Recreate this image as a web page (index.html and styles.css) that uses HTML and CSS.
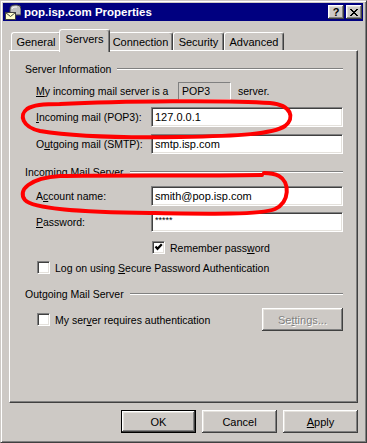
FILE: index.html
```html
<!DOCTYPE html>
<html lang="en">
<head>
    <meta charset="UTF-8">
    <title>pop.isp.com Properties</title>
    <link rel="stylesheet" href="styles.css">
</head>
<body>
    <div class="window">
        <div class="titlebar">
            <svg class="app-icon" viewBox="0 0 16 16">
                <path d="M5 11 V5 Q5 1 10 1 H12 Q16 1 16 5 V11 Z" fill="#c0c0c0" stroke="#404040"/>
                <path d="M7 5 Q7 3 10 3 H12" fill="none" stroke="#fff"/>
                <rect x="0.5" y="8.5" width="10" height="7" fill="#ffffcc" stroke="#404040"/>
                <polyline points="0.5,8.5 5.5,12.5 10.5,8.5" fill="none" stroke="#404040"/>
            </svg>
            <span class="title">pop.isp.com Properties</span>
            <div class="caption-buttons">
                <button class="cap-btn help">?</button>
                <button class="cap-btn">
                    <svg width="8" height="7" viewBox="0 0 8 7"><path d="M0 0 L7 7 M1 0 L8 7 M7 0 L0 7 M8 0 L1 7" stroke="#000" stroke-width="1"/></svg>
                </button>
            </div>
        </div>

        <div class="dialog">
            <div class="tabs">
                <div class="tab tab-general">General</div>
                <div class="tab tab-servers selected">Servers</div>
                <div class="tab tab-connection">Connection</div>
                <div class="tab tab-security">Security</div>
                <div class="tab tab-advanced">Advanced</div>
            </div>

            <div class="panel">
                <div class="group-title"><span>Server Information</span><i class="etch"></i></div>
                <div class="field-row type-row">
                    <label class="type-label"><u>M</u>y incoming mail server is a</label>
                    <div class="readonly-box">POP3</div>
                    <span class="type-suffix">server.</span>
                </div>
                <div class="field-row gap7">
                    <label><u>I</u>ncoming mail (POP3):</label>
                    <input class="textbox" type="text" value="127.0.0.1">
                </div>
                <div class="field-row gap7">
                    <label>O<u>u</u>tgoing mail (SMTP):</label>
                    <input class="textbox" type="text" value="smtp.isp.com">
                </div>

                <div class="group-title group-two"><span>Incoming Mail Server</span><i class="etch"></i></div>
                <div class="field-row gap7">
                    <label>A<u>c</u>count name:</label>
                    <input class="textbox" type="text" value="smith@pop.isp.com">
                </div>
                <div class="field-row gap6">
                    <label><u>P</u>assword:</label>
                    <input class="textbox password" type="text" value="*****">
                </div>
                <div class="check-row remember-row">
                    <span class="checkbox">
                        <svg width="9" height="9" viewBox="0 0 9 9"><polyline points="1.5,3.5 3.5,5.8 7.8,1.2" fill="none" stroke="#000" stroke-width="2.2"/></svg>
                    </span>
                    <span>Remember pass<u>w</u>ord</span>
                </div>
                <div class="check-row logon-row">
                    <span class="checkbox"></span>
                    <span>Log on using <u>S</u>ecure Password Authentication</span>
                </div>

                <div class="group-title group-three"><span>Outgoing Mail Server</span><i class="etch"></i></div>
                <div class="check-row auth-row">
                    <span class="checkbox"></span>
                    <span>My ser<u>v</u>er requires authentication</span>
                    <button class="btn settings" disabled>Se<u>t</u>tings...</button>
                </div>
            </div>

            <div class="actions">
                <button class="btn default">OK</button>
                <button class="btn">Cancel</button>
                <button class="btn"><u>A</u>pply</button>
            </div>
        </div>

        <!-- red marker circles drawn over the dialog -->
        <svg class="annotations" width="367" height="443" viewBox="0 0 367 443">
            <path d="M60 104 C120 101 230 100 270 103 C292 105 295 118 285 126 C273 134 240 136 180 137 C120 138 70 136 40 131 C22 127 19 115 27 109 C33 105 42 104 62 104" />
            <path d="M262 175 C200 176 100 175 60 176 C30 178 17 190 25 200 C33 209 80 212 150 213 C210 214 260 215 275 209 C290 202 290 182 279 176 C273 173 268 173 264 173" />
        </svg>
    </div>
</body>
</html>
```

FILE: styles.css
```css
:root {
    --face: #cdc9c5;
    --face-light: #e4e1dc;
    --shadow: #808080;
    --dark: #404040;
    --light: #ffffff;
    --title: #000080;
    --raised: inset -1px -1px var(--dark), inset 1px 1px var(--light), inset -2px -2px var(--shadow), inset 2px 2px var(--face-light);
}

body {
    margin: 0;
    font-family: 'Liberation Sans', Arial, sans-serif;
    font-size: 10.5px;
    color: #000;
    background: #fff;
}

.window {
    position: relative;
    width: 367px;
    height: 443px;
    box-sizing: border-box;
    display: flex;
    flex-direction: column;
    padding: 2px 3px 3px 2px;
    background: var(--face);
    border: 1px solid;
    border-color: var(--face) var(--dark) var(--dark) var(--face);
    box-shadow: inset 1px 1px var(--light), inset -1px -1px var(--shadow);
}

.titlebar {
    height: 18px;
    display: flex;
    align-items: center;
    background: var(--title);
    color: #fff;
}

.app-icon {
    width: 16px;
    height: 16px;
    flex: none;
    margin: 0 3px 0 2px;
}

.title {
    flex: 1;
    font-weight: bold;
    font-size: 11.5px;
}

.caption-buttons {
    display: flex;
    gap: 2px;
    margin-right: 1px;
}

.cap-btn {
    width: 16px;
    height: 14px;
    padding: 0;
    border: none;
    background: var(--face);
    box-shadow: var(--raised);
    display: flex;
    align-items: center;
    justify-content: center;
    font-family: inherit;
    font-weight: bold;
    font-size: 11px;
    line-height: 1;
    color: #000;
}

.dialog {
    flex: 1;
    display: flex;
    flex-direction: column;
    padding: 8px 5px 0 6px;
}

.tabs {
    height: 21px;
    display: flex;
    align-items: flex-end;
    padding-left: 2px;
    font-size: 11px;
}

.tab {
    height: 18px;
    box-sizing: border-box;
    display: flex;
    align-items: center;
    justify-content: center;
    background: var(--face);
    border: 1px solid var(--light);
    border-bottom: none;
    border-right-color: var(--dark);
    border-radius: 3px 3px 0 0;
    box-shadow: inset -1px 0 var(--shadow);
}

.tab-general { width: 50px; }
.tab-servers { width: 47px; }
.tab-connection { width: 65px; }
.tab-security { width: 51px; }
.tab-advanced { width: 60px; }

.tab.selected {
    width: 51px;
    height: 23px;
    margin: 0 -2px -2px;
    padding-bottom: 4px;
    position: relative;
    z-index: 1;
}

.panel {
    height: 353px;
    box-sizing: border-box;
    display: flex;
    flex-direction: column;
    padding: 11px 14px 0 15px;
    border: 1px solid;
    border-color: var(--light) var(--dark) var(--dark) var(--light);
    box-shadow: inset -1px -1px var(--shadow);
}

.group-title {
    height: 14px;
    display: flex;
    align-items: center;
}

.group-title .etch {
    flex: 1;
    margin-left: 6px;
    border-top: 1px solid var(--shadow);
    border-bottom: 1px solid var(--light);
}

.group-two { margin-top: 11px; }
.group-three { margin-top: 13px; }

.field-row {
    display: flex;
    align-items: center;
    padding-left: 11px;
}

.field-row label {
    width: 115px;
    flex: none;
}

.gap6 { margin-top: 6px; }
.gap7 { margin-top: 7px; }

.type-row {
    height: 18px;
    margin-top: 6px;
}

.field-row .type-label { width: 142px; }

.readonly-box {
    width: 53px;
    height: 18px;
    box-sizing: border-box;
    display: flex;
    align-items: center;
    padding-left: 3px;
    border: 1px solid;
    border-color: var(--shadow) var(--light) var(--light) var(--shadow);
}

.type-suffix { margin-left: 7px; }

.textbox {
    flex: 1;
    min-width: 0;
    height: 20px;
    box-sizing: border-box;
    margin: 0;
    padding: 0 0 0 3px;
    font: inherit;
    font-size: 11px;
    color: #000;
    background: #fff;
    border: 1px solid;
    border-color: var(--shadow) var(--light) var(--light) var(--shadow);
    box-shadow: inset 1px 1px var(--dark), inset -1px -1px var(--face-light);
    outline: none;
}

.textbox.password {
    font-size: 9px;
    padding-bottom: 4px;
}

.check-row {
    display: flex;
    align-items: center;
}

.checkbox {
    width: 13px;
    height: 13px;
    box-sizing: border-box;
    flex: none;
    display: flex;
    align-items: center;
    justify-content: center;
    margin-right: 5px;
    background: #fff;
    border: 1px solid;
    border-color: var(--shadow) var(--light) var(--light) var(--shadow);
    box-shadow: inset 1px 1px var(--dark), inset -1px -1px var(--face-light);
}

.remember-row {
    height: 13px;
    margin-top: 9px;
    padding-left: 127px;
}

.logon-row {
    height: 13px;
    margin-top: 7px;
    padding-left: 12px;
}

.auth-row {
    height: 23px;
    margin-top: 7px;
    padding-left: 12px;
}

.btn {
    width: 75px;
    height: 23px;
    padding: 0;
    border: none;
    background: var(--face);
    box-shadow: var(--raised);
    font: inherit;
    font-size: 11px;
    color: #000;
}

.btn.default {
    box-shadow: inset 0 0 0 1px #000, inset -2px -2px var(--dark), inset 2px 2px var(--light), inset -3px -3px var(--shadow), inset 3px 3px var(--face-light);
}

.btn.settings {
    width: 81px;
    margin-left: auto;
    color: var(--shadow);
    text-shadow: 1px 1px var(--light);
}

.actions {
    margin-top: 7px;
    display: flex;
    justify-content: flex-end;
    gap: 6px;
}

.annotations {
    position: absolute;
    left: -1px;
    top: -1px;
    pointer-events: none;
}

.annotations path {
    fill: none;
    stroke: #ff0000;
    stroke-width: 4;
    stroke-linecap: round;
    stroke-linejoin: round;
}
```
